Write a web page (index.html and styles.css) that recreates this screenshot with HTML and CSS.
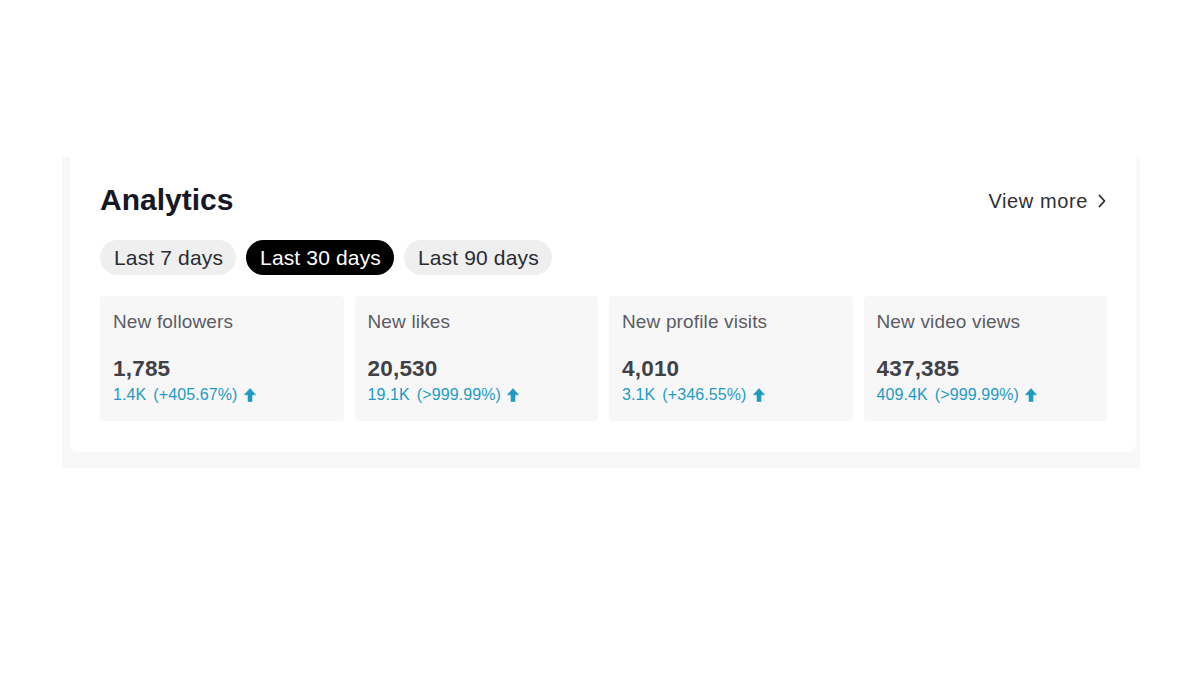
FILE: index.html
```html
<!DOCTYPE html>
<html>
<head>
<meta charset="utf-8">
<link rel="stylesheet" href="styles.css">
</head>
<body>
<div class="wrap">
  <section class="panel">
    <div class="header">
      <h2 class="title">Analytics</h2>
      <a class="more">View more
        <svg class="chev" width="10" height="16" viewBox="0 0 10 16"><path d="M2.5 2.5 L7.5 8 L2.5 13.5" fill="none" stroke="#2a2a2a" stroke-width="1.8" stroke-linecap="round" stroke-linejoin="round"/></svg>
      </a>
    </div>
    <div class="tabs">
      <span class="tab">Last 7 days</span>
      <span class="tab active">Last 30 days</span>
      <span class="tab">Last 90 days</span>
    </div>
    <div class="stats">
      <div class="stat">
        <div class="label">New followers</div>
        <div class="value">1,785</div>
        <div class="change"><span>1.4K</span><span>(+405.67%)</span><svg class="up" width="12" height="14" viewBox="0 0 12 14"><path d="M6 0.5 L11.5 6.8 L8 6.8 L8 13.5 L4 13.5 L4 6.8 L0.5 6.8 Z" fill="#1e9bc4" stroke="#1e9bc4" stroke-width="0.6" stroke-linejoin="round"/></svg></div>
      </div>
      <div class="stat">
        <div class="label">New likes</div>
        <div class="value">20,530</div>
        <div class="change"><span>19.1K</span><span>(&gt;999.99%)</span><svg class="up" width="12" height="14" viewBox="0 0 12 14"><path d="M6 0.5 L11.5 6.8 L8 6.8 L8 13.5 L4 13.5 L4 6.8 L0.5 6.8 Z" fill="#1e9bc4" stroke="#1e9bc4" stroke-width="0.6" stroke-linejoin="round"/></svg></div>
      </div>
      <div class="stat">
        <div class="label">New profile visits</div>
        <div class="value">4,010</div>
        <div class="change"><span>3.1K</span><span>(+346.55%)</span><svg class="up" width="12" height="14" viewBox="0 0 12 14"><path d="M6 0.5 L11.5 6.8 L8 6.8 L8 13.5 L4 13.5 L4 6.8 L0.5 6.8 Z" fill="#1e9bc4" stroke="#1e9bc4" stroke-width="0.6" stroke-linejoin="round"/></svg></div>
      </div>
      <div class="stat">
        <div class="label">New video views</div>
        <div class="value">437,385</div>
        <div class="change"><span>409.4K</span><span>(&gt;999.99%)</span><svg class="up" width="12" height="14" viewBox="0 0 12 14"><path d="M6 0.5 L11.5 6.8 L8 6.8 L8 13.5 L4 13.5 L4 6.8 L0.5 6.8 Z" fill="#1e9bc4" stroke="#1e9bc4" stroke-width="0.6" stroke-linejoin="round"/></svg></div>
      </div>
    </div>
  </section>
</div>
</body>
</html>
```
FILE: styles.css
```css
html, body {
  margin: 0;
  padding: 0;
  background: #ffffff;
  font-family: "Liberation Sans", Arial, sans-serif;
}
.wrap {
  margin: 157px 0 0 62px;
  width: 1078px;
  box-sizing: border-box;
  padding: 0 4px 16px 8px;
  background: #f8f8f8;
}
.panel {
  background: #ffffff;
  border-radius: 0 0 8px 8px;
  padding: 25px 29px 31px 30px;
}
.header {
  display: flex;
  align-items: center;
  justify-content: space-between;
}
.title {
  margin: 0;
  font-size: 30px;
  line-height: 36px;
  font-weight: 700;
  color: #161823;
}
.more {
  display: flex;
  align-items: center;
  gap: 9px;
  font-size: 20px;
  line-height: 24px;
  letter-spacing: 0.6px;
  color: #2f2f33;
  padding-top: 2px;
}
.chev { display: block; }
.tabs {
  display: flex;
  gap: 10px;
  margin-top: 22px;
}
.tab {
  display: inline-flex;
  align-items: center;
  height: 35px;
  padding: 0 13px 0 14px;
  border-radius: 18px;
  background: #efefef;
  font-size: 21px;
  letter-spacing: 0.15px;
  color: #2a2b33;
}
.tab.active {
  background: #000000;
  color: #ffffff;
}
.stats {
  display: grid;
  grid-template-columns: repeat(4, 1fr);
  gap: 11px;
  margin-top: 21px;
}
.stat {
  background: #f7f7f7;
  border-radius: 4px;
  height: 125px;
  box-sizing: border-box;
  padding: 14px 13px 0 13px;
}
.label {
  font-size: 19px;
  line-height: 24px;
  letter-spacing: 0.15px;
  color: #5b5c63;
}
.value {
  margin-top: 25px;
  font-size: 22.5px;
  line-height: 20px;
  font-weight: 700;
  letter-spacing: 0.2px;
  color: #404148;
}
.change {
  display: flex;
  align-items: center;
  gap: 7px;
  margin-top: 8px;
  font-size: 16px;
  line-height: 16px;
  letter-spacing: 0.1px;
  color: #1e9bc4;
  white-space: nowrap;
}
.up { display: block; margin-left: -1px; }
```
